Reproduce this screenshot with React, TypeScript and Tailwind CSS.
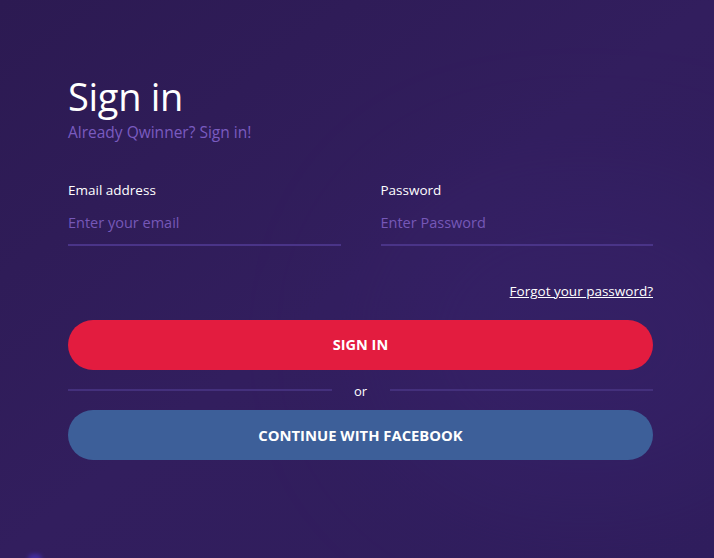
export default function App() {
  return (
    <div
      className="relative h-[558px] w-[714px] overflow-hidden bg-gradient-to-br from-[#2c1a52] via-[#321e5e] to-[#2f1d5c] font-['Open_Sans',sans-serif]"
    >
      {/* soft glow */}
      <div className="pointer-events-none absolute right-[-80px] top-[180px] h-[320px] w-[420px] rounded-full bg-[#3a2470] opacity-40 blur-3xl" />
      <div className="pointer-events-none absolute bottom-[-6px] left-[28px] h-[10px] w-[14px] rounded-full bg-[#4a36c8] opacity-60 blur-[2px]" />

      <div className="relative flex w-[585px] flex-col ml-[68px] pt-[73px]">
        <h1 className="text-[38px] leading-[46px] tracking-[-0.3px] text-white">Sign in</h1>
        <p className="mt-[3px] text-[15.5px] leading-[20px] text-[#7a5bc0]">Already Qwinner? Sign in!</p>

        <div className="mt-[39px] grid grid-cols-2 gap-[40px]">
          <label className="flex flex-col">
            <span className="text-[13.5px] leading-[18px] text-white">Email address</span>
            <input
              type="email"
              placeholder="Enter your email"
              className="mt-[10px] h-[37px] border-b-2 border-[#4a3488] bg-transparent pb-[8px] text-[14.5px] text-white outline-none placeholder:text-[#7658b8]"
            />
          </label>
          <label className="flex flex-col">
            <span className="text-[13.5px] leading-[18px] text-white">Password</span>
            <input
              type="password"
              placeholder="Enter Password"
              className="mt-[10px] h-[37px] border-b-2 border-[#4a3488] bg-transparent pb-[8px] text-[14.5px] text-white outline-none placeholder:text-[#7658b8]"
            />
          </label>
        </div>

        <div className="mt-[36px] flex justify-end">
          <a href="#" className="text-[13.5px] leading-[18px] text-white underline">
            Forgot your password?
          </a>
        </div>

        <button className="mt-[20px] h-[50px] w-full rounded-full bg-[#e31c3f] text-[14.5px] font-bold text-white">
          SIGN IN
        </button>

        <div className="flex h-[40px] items-center">
          <div className="h-[2px] flex-1 bg-[#44307c]" />
          <span className="w-[58px] pt-[3px] text-center text-[13px] text-white">or</span>
          <div className="h-[2px] flex-1 bg-[#44307c]" />
        </div>

        <button className="h-[50px] w-full rounded-full bg-[#3d5f99] text-[14.8px] font-bold text-white">
          CONTINUE WITH FACEBOOK
        </button>
      </div>
    </div>
  );
}
